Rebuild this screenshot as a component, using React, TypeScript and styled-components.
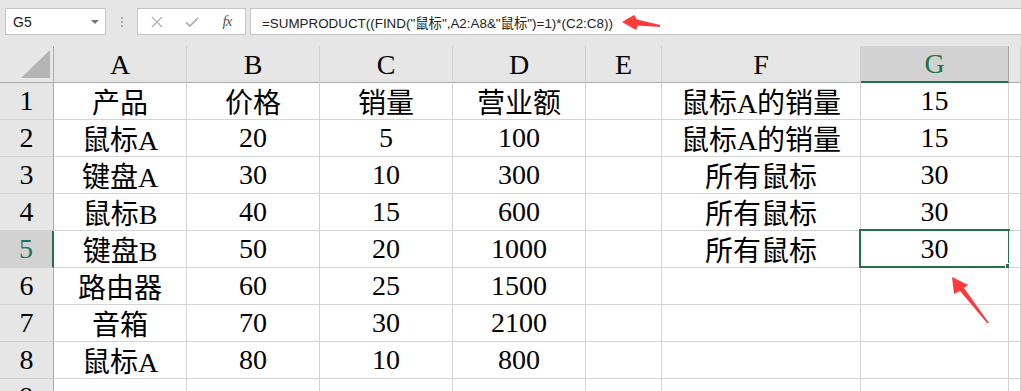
import React from 'react';
import styled, { createGlobalStyle, css } from 'styled-components';

const GlobalStyle = createGlobalStyle`
  html, body { margin: 0; padding: 0; background: #ffffff; }
  body { width: 1021px; height: 391px; overflow: hidden; }
`;

const Frame = styled.div`
  position: relative;
  width: 1021px;
  height: 391px;
  overflow: hidden;
  background: #ffffff;
`;

const TopBar = styled.div`
  height: 46px;
  box-sizing: border-box;
  padding-top: 8px;
  background: #e6e6e6;
  display: flex;
  align-items: flex-start;
`;

const NameBox = styled.div`
  margin-left: 5px;
  width: 101px;
  height: 27px;
  box-sizing: border-box;
  border: 1px solid #c6c6c6;
  background: #ffffff;
  display: flex;
  align-items: center;
  justify-content: space-between;
  padding: 0 6px 0 7px;
  font: 14px "Liberation Sans", Arial, sans-serif;
  color: #222222;
`;

const Caret = styled.span`
  width: 0;
  height: 0;
  border-left: 4px solid transparent;
  border-right: 4px solid transparent;
  border-top: 4px solid #7a7a7a;
`;

const Grip = styled.div`
  width: 31px;
  height: 27px;
  display: flex;
  flex-direction: column;
  align-items: center;
  justify-content: center;
  gap: 2px;
`;

const GripDot = styled.span`
  width: 2px;
  height: 2px;
  background: #a9a9a9;
`;

const ButtonBox = styled.div`
  width: 109px;
  height: 27px;
  box-sizing: border-box;
  border: 1px solid #c6c6c6;
  background: #ffffff;
  display: flex;
  align-items: center;
  padding-left: 11px;
  gap: 19px;
`;

const IconSlot = styled.span`
  width: 16px;
  height: 16px;
  display: flex;
  align-items: center;
  justify-content: center;
`;

const Fx = styled.span`
  font: italic 15px "Liberation Serif", "Times New Roman", serif;
  color: #555555;
  letter-spacing: -1px;
`;

const FormulaBox = styled.div`
  margin-left: 4px;
  flex: 1;
  height: 27px;
  box-sizing: border-box;
  border: 1px solid #c6c6c6;
  border-right: none;
  background: #ffffff;
  display: flex;
  align-items: center;
  padding-left: 11px;
  font: 13.4px "Liberation Sans", "Noto Sans CJK SC", Arial, sans-serif;
  color: #222222;
  white-space: nowrap;
`;

const Sheet = styled.div`
  display: grid;
  grid-template-columns: 54px 133px 133px 133px 133px 76px 199px 148px 1fr;
  grid-auto-rows: 37px;
  font-family: "Liberation Serif", "Noto Sans CJK SC", serif;
  font-size: 28px;
  color: #000000;
`;

const cellBase = css`
  box-sizing: border-box;
  display: flex;
  align-items: center;
  justify-content: center;
  white-space: nowrap;
  overflow: visible;
  position: relative;
`;

const Corner = styled.div`
  ${cellBase};
  background: #e6e6e6;
  border-right: 1px solid #ababab;
  border-bottom: 1px solid #ababab;
  justify-content: flex-end;
  align-items: flex-end;
  padding: 0 3px 4px 0;
`;

const CornerTriangle = styled.span`
  width: 0;
  height: 0;
  border-left: 29px solid transparent;
  border-bottom: 28px solid #b5b5b5;
`;

const ColHeader = styled.div<{ $active?: boolean }>`
  ${cellBase};
  background: ${(p) => (p.$active ? '#d2d2d2' : '#e6e6e6')};
  color: ${(p) => (p.$active ? '#217346' : '#000000')};
  border-right: 1px solid ${(p) => (p.$active ? '#a6a6a6' : '#d0d0d0')};
  border-bottom: ${(p) => (p.$active ? '2px solid #217346' : '1px solid #ababab')};
  padding-top: 1px;
`;

const RowHeader = styled.div<{ $active?: boolean }>`
  ${cellBase};
  background: ${(p) => (p.$active ? '#d2d2d2' : '#e6e6e6')};
  color: ${(p) => (p.$active ? '#217346' : '#000000')};
  border-right: ${(p) => (p.$active ? '2px solid #217346' : '1px solid #ababab')};
  border-bottom: 1px solid #d0d0d0;
`;

const Cell = styled.div`
  ${cellBase};
  background: #ffffff;
  border-right: 1px solid #d4d4d4;
  border-bottom: 1px solid #d4d4d4;
`;

const Selection = styled.span`
  position: absolute;
  top: -2px;
  left: -2px;
  right: -2px;
  bottom: -1px;
  border: 2px solid #217346;
  pointer-events: none;
`;

const FillHandle = styled.span`
  position: absolute;
  right: -4px;
  bottom: -4px;
  width: 6px;
  height: 6px;
  background: #217346;
  border: 1px solid #ffffff;
  box-sizing: content-box;
  margin: -1px;
`;

const Overlay = styled.svg`
  position: absolute;
  left: 0;
  top: 0;
  pointer-events: none;
`;

const columns = ['A', 'B', 'C', 'D', 'E', 'F', 'G', ''];

const rows: string[][] = [
  ['产品', '价格', '销量', '营业额', '', '鼠标A的销量', '15', ''],
  ['鼠标A', '20', '5', '100', '', '鼠标A的销量', '15', ''],
  ['键盘A', '30', '10', '300', '', '所有鼠标', '30', ''],
  ['鼠标B', '40', '15', '600', '', '所有鼠标', '30', ''],
  ['键盘B', '50', '20', '1000', '', '所有鼠标', '30', ''],
  ['路由器', '60', '25', '1500', '', '', '', ''],
  ['音箱', '70', '30', '2100', '', '', '', ''],
  ['鼠标A', '80', '10', '800', '', '', '', ''],
  ['', '', '', '', '', '', '', ''],
];

const ACTIVE_COL = 6;
const ACTIVE_ROW = 4;

export default function App() {
  return (
    <Frame>
      <GlobalStyle />
      <TopBar>
        <NameBox>
          <span>G5</span>
          <Caret />
        </NameBox>
        <Grip>
          <GripDot />
          <GripDot />
          <GripDot />
        </Grip>
        <ButtonBox>
          <IconSlot>
            <svg width="12" height="12" viewBox="0 0 12 12">
              <path d="M1 1 L11 11 M11 1 L1 11" stroke="#b3b3b3" strokeWidth="1.4" fill="none" />
            </svg>
          </IconSlot>
          <IconSlot>
            <svg width="14" height="12" viewBox="0 0 14 12">
              <path d="M1 6.5 L5 10 L13 2" stroke="#b3b3b3" strokeWidth="1.8" fill="none" />
            </svg>
          </IconSlot>
          <IconSlot>
            <Fx>fx</Fx>
          </IconSlot>
        </ButtonBox>
        <FormulaBox>=SUMPRODUCT((FIND("鼠标",A2:A8&amp;"鼠标")=1)*(C2:C8))</FormulaBox>
      </TopBar>
      <Sheet>
        <Corner>
          <CornerTriangle />
        </Corner>
        {columns.map((c, i) => (
          <ColHeader key={'h' + i} $active={i === ACTIVE_COL}>
            {c}
          </ColHeader>
        ))}
        {rows.map((r, ri) => (
          <React.Fragment key={'r' + ri}>
            <RowHeader $active={ri === ACTIVE_ROW}>{ri + 1}</RowHeader>
            {r.map((v, ci) => (
              <Cell key={ci}>
                {v}
                {ri === ACTIVE_ROW && ci === ACTIVE_COL && (
                  <Selection>
                    <FillHandle />
                  </Selection>
                )}
              </Cell>
            ))}
          </React.Fragment>
        ))}
      </Sheet>
      <Overlay width="1021" height="391" viewBox="0 0 1021 391">
        <polygon
          points="622,22 634,15 637,19.5 660,25 660,27 638,25.5 636,30"
          fill="#ff3a3a"
        />
        <polygon
          points="952,277 968,285 964,288 989,323 987,323 960,291 954,294"
          fill="#ff3a3a"
        />
      </Overlay>
    </Frame>
  );
}
